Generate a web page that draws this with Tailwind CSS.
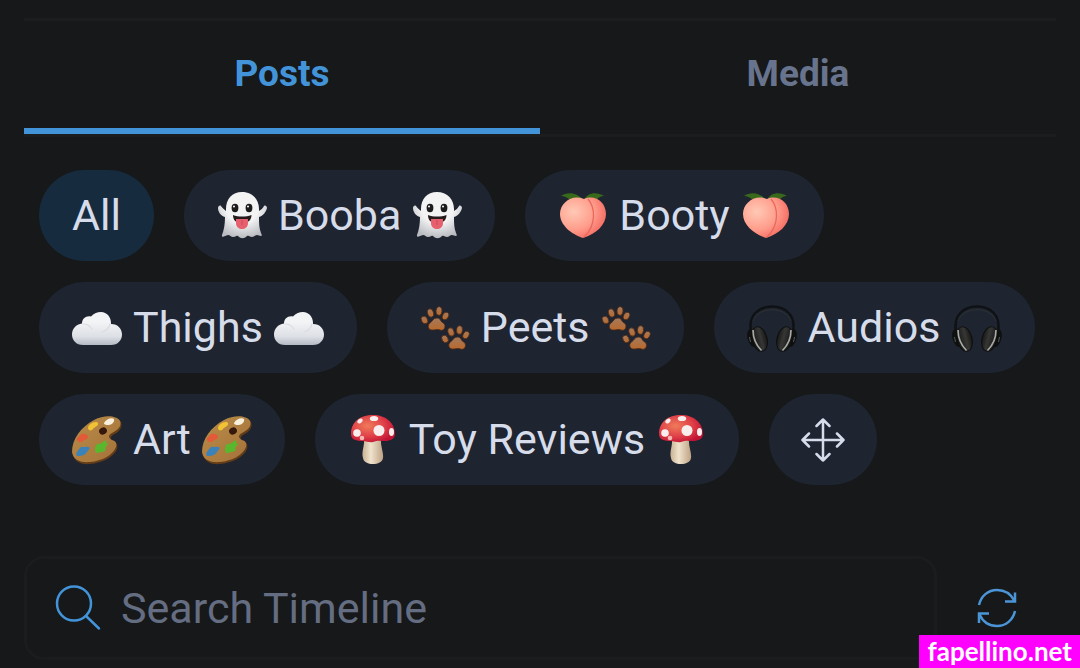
<!DOCTYPE html>
<html lang="en">
<head>
  <meta charset="UTF-8">
  <title>Timeline</title>
  <meta name="viewport" content="width=device-width, initial-scale=1.0" />
  <script src="https://cdn.jsdelivr.net/npm/@tailwindcss/browser@4"></script>
</head>
<body class="min-h-screen overflow-hidden bg-[#161819] font-[Roboto,sans-serif] text-[#d6dcea]">
  <!-- emoji artwork, reused by the chips -->
  <svg class="absolute size-0" aria-hidden="true">
    <defs>
      <radialGradient id="ghostFill" cx=".5" cy=".35" r=".65"><stop offset=".5" stop-color="#f3f3f4"/><stop offset="1" stop-color="#b9bbc0"/></radialGradient>
      <radialGradient id="peachFill" cx=".3" cy=".35" r=".75"><stop offset="0" stop-color="#ffc9b5"/><stop offset=".6" stop-color="#ff9c8b"/><stop offset="1" stop-color="#f4685f"/></radialGradient>
      <linearGradient id="cloudFill" x1="0" y1="0" x2="0" y2="1"><stop offset=".3" stop-color="#f3f4f6"/><stop offset=".75" stop-color="#dcdfe5"/><stop offset="1" stop-color="#b4b9c3"/></linearGradient>
      <linearGradient id="pawFill" x1="0" y1="0" x2="0" y2="1"><stop offset="0" stop-color="#a57a5c"/><stop offset="1" stop-color="#b9692c"/></linearGradient>
      <linearGradient id="woodFill" x1="0" y1="0" x2="1" y2="1"><stop offset="0" stop-color="#b98d48"/><stop offset="1" stop-color="#a4713a"/></linearGradient>
      <radialGradient id="capFill" cx=".38" cy=".4" r=".65"><stop offset="0" stop-color="#f07b5a"/><stop offset=".6" stop-color="#df3f48"/><stop offset="1" stop-color="#c11434"/></radialGradient>
      <linearGradient id="stemFill"><stop offset="0" stop-color="#c9b292"/><stop offset=".4" stop-color="#f0e3cd"/><stop offset="1" stop-color="#bea283"/></linearGradient>
      <linearGradient id="cupFill"><stop offset="0" stop-color="#111211"/><stop offset=".6" stop-color="#363735"/><stop offset="1" stop-color="#151615"/></linearGradient>

      <symbol id="ghost" viewBox="0 0 50 50">
        <path fill="url(#ghostFill)" d="M25 1C15 1 9 8 9 18v2C7 18 5 17 4 15c-1-1-3 0-3 2 0 4 3 8 7 9 0 7-1 13-3 18-.5 2 1 2 3 1l3-1c2 0 3 2 5 2 3 0 3-2 5-1 3 3 6 3 9 0 2-1 3 1 5 1 2 0 3-2 5-2l4 1c1 0 1-1 0-3-2-5-2-10-2-16 4-1 7-5 8-9 0-2-2-3-3-2-1 2-3 4-5 5v-2C42 8 35 1 25 1z"/>
        <ellipse cx="18" cy="17" rx="3.400" ry="4.200" fill="#1d1b1c"/><ellipse cx="32" cy="17" rx="3.400" ry="4.200" fill="#1d1b1c"/>
        <circle cx="17" cy="15.500" r="1" fill="#fff"/><circle cx="31" cy="15.500" r="1" fill="#fff"/>
        <path fill="#251b1c" d="M16 24c5 2 13 2 18.500 0 0 5-3 8-9.500 8s-9-3-9-8z"/>
        <path fill="#e7606e" d="M19 28h12v4c0 8-12 8-12 0z"/><path d="M25 29v5" stroke="#c94659" stroke-width="1"/>
      </symbol>
      <symbol id="peach" viewBox="0 0 50 50">
        <path fill="#39691b" d="M25 9C20 2 10 0 3 5c6 0 8 5 15 5zM26 9c4-8 13-8 20-4-6 0-7 5-13 6z"/>
        <path fill="url(#peachFill)" d="M26 8C14 3 2 12 2 23c0 11 11 20 23 24 13-4 23-13 23-24C48 11 37 3 26 8z"/>
        <path d="M30 8c7 8 9 26-4 38" fill="none" stroke="#e8685d" stroke-width="1.300"/>
      </symbol>
      <symbol id="cloud" viewBox="0 0 50 50">
        <path fill="url(#cloudFill)" d="M11 42C4 42 0 37 0 31.500 0 26 4 21 10 20.500c0-5 4-8 9-7C21 11 25 9 29 9c6 0 10 5 10 11v1c7 0 11 5 11 10.500C50 37 46 42 39 42z"/>
        <path d="M11 21c4 0 7 2 9 5M38 21c-1 4-4 7-8 8" fill="none" stroke="#d9dce1" stroke-width="1.200" stroke-linecap="round"/>
      </symbol>
      <symbol id="paws" viewBox="0 0 50 50">
        <g id="paw" fill="url(#pawFill)" stroke="#4e2a18" stroke-width=".8">
          <path d="M17 15c-4 0-4 3-7 5s-2 7 2 7 5-1 8 0 5-1 5-4-3-3-4-5-2-3-4-3z"/>
          <ellipse cx="4.500" cy="17" rx="3" ry="4" transform="rotate(-30 4.500 17)"/><ellipse cx="10.500" cy="10" rx="3" ry="4.300" transform="rotate(-18 10.500 10)"/>
          <ellipse cx="19" cy="8" rx="3" ry="4.300" transform="rotate(8 19 8)"/><ellipse cx="25.500" cy="13" rx="2.900" ry="4" transform="rotate(28 25.500 13)"/>
        </g>
        <use href="#paw" x="20.500" y="19"/>
      </symbol>
      <symbol id="headphones" viewBox="0 0 50 50">
        <path d="M4 28C1 12 12 3.500 25 3.500S49 12 46 28" fill="none" stroke="#0f1214" stroke-width="2.500"/>
        <path d="M6 18C11 3 39 3 44 18" fill="none" stroke="#2d3132" stroke-width="1"/>
        <g id="cup">
          <ellipse cx="5" cy="35" rx="4.500" ry="9" fill="#0f1010" transform="rotate(-14 5 35)"/>
          <ellipse cx="12.500" cy="36" rx="7.500" ry="12.500" fill="url(#cupFill)" stroke="#0d0e0d" transform="rotate(-14 12.500 36)"/>
          <path d="M6 27c0 9 3 15 8.500 20.500" fill="none" stroke="#a8aaa6" stroke-width="1.700"/>
          <path d="M2.500 34l1 5" stroke="#555855" stroke-width="1"/>
        </g>
        <use href="#cup" transform="matrix(-1 0 0 1 50 0)"/>
      </symbol>
      <symbol id="palette" viewBox="0 0 50 50">
        <path fill="#633c18" d="M1 39C0 25 9 13 23 6c10-5 22-5 26 1 2 6-2 10-8 13-3 2-3 5 0 6 4 1 5 4 4 8-3 8-15 14-27 15C8 50 2 46 1 39z"/>
        <path fill="url(#woodFill)" d="M0 37C0 24 9 12 22 5c10-5 22-5 26 1 2 5-2 9-8 12-4 2-4 5 0 7 4 1 5 4 4 7-3 8-14 14-26 15C7 48 1 44 0 37z"/>
        <ellipse cx="31" cy="16" rx="4" ry="3.400" fill="#35170b" transform="rotate(-30 31 16)"/>
        <path fill="#f7f0dc" d="M32 8c2-4 8-6 10-4 1 3-3 6-5 6s-5 0-5-2z"/>
        <path fill="#f1c234" d="M16 13c0-4 8-8 10-5 1 3-4 4-5 6s-5 2-5-1z"/>
        <path fill="#e25a37" d="M5 25c-1-2 3-4 4-6 3-1 7 0 7 3s-4 2-5 4-5 1-6-1z"/>
        <path fill="#3a82b8" d="M5 37c2-2 3-6 6-5 2 0 5-1 7 1l-3 4c-2 4-7 4-10 4-1-1-1-3 0-4z"/>
        <path fill="#59b72e" d="M23 36c0-4 1-8 5-7l6-4c1 2-1 3 2 4l-3 4c2 3-2 4-4 4s-4 3-6-1z"/>
      </symbol>
      <symbol id="mushroom" viewBox="0 0 50 50">
        <path fill="url(#stemFill)" d="M16 22c1 9-3 15-1 21 1 8 19 8 20 0 1-5-3-12-2-21z"/>
        <path fill="url(#capFill)" d="M3 19C3 7 12 0 25 0s22 8 22 19c0 5-5 7-10 7-4 0-7-1-12 1-3 1-6-1-11-1C7 26 3 24 3 19z"/>
        <g fill="#f9eeee">
          <circle cx="9" cy="18" r="3.800"/><ellipse cx="26" cy="3.500" rx="4.200" ry="2.600"/><circle cx="31" cy="15.500" r="5.500"/>
          <ellipse cx="43.500" cy="17" rx="2.500" ry="4"/><circle cx="14" cy="23" r="2.300" fill="#f6b6b2"/><ellipse cx="12" cy="6" rx="3" ry="2" transform="rotate(-35 12 6)"/>
        </g>
      </symbol>
    </defs>
  </svg>

  <main class="px-6 pt-[18px]">
    <div role="tablist" class="grid grid-cols-2 border-y-3 border-[#1c1d1f] text-[37px] font-bold">
      <button role="tab" aria-selected="true" class="border-b-6 border-[#4393d9] pt-7 pb-[30px] leading-[49px] text-[#4393d9]">Posts</button>
      <button role="tab" aria-selected="false" class="border-b-6 border-transparent pt-7 pb-[30px] leading-[49px] text-[#68748e]">Media</button>
    </div>

    <div class="mt-[33px] flex flex-wrap gap-x-[30px] gap-y-[21px] px-[15px] text-[43px]">
      <button class="flex h-[91px] items-center rounded-full bg-[#162b3e] px-[33px]">All</button>
      <button class="flex h-[91px] items-center gap-[11px] rounded-full bg-[#1e2430] px-[33px]">
        <svg class="size-[50px]" aria-hidden="true"><use href="#ghost"/></svg>Booba<svg class="size-[50px]" aria-hidden="true"><use href="#ghost"/></svg>
      </button>
      <button class="flex h-[91px] items-center gap-[11px] rounded-full bg-[#1e2430] px-[33px]">
        <svg class="size-[50px]" aria-hidden="true"><use href="#peach"/></svg>Booty<svg class="size-[50px]" aria-hidden="true"><use href="#peach"/></svg>
      </button>
      <button class="flex h-[91px] items-center gap-[11px] rounded-full bg-[#1e2430] px-[33px]">
        <svg class="size-[50px]" aria-hidden="true"><use href="#cloud"/></svg>Thighs<svg class="size-[50px]" aria-hidden="true"><use href="#cloud"/></svg>
      </button>
      <button class="flex h-[91px] items-center gap-[11px] rounded-full bg-[#1e2430] px-[33px]">
        <svg class="size-[50px]" aria-hidden="true"><use href="#paws"/></svg>Peets<svg class="size-[50px]" aria-hidden="true"><use href="#paws"/></svg>
      </button>
      <button class="flex h-[91px] items-center gap-[11px] rounded-full bg-[#1e2430] px-[33px]">
        <svg class="size-[50px]" aria-hidden="true"><use href="#headphones"/></svg>Audios<svg class="size-[50px]" aria-hidden="true"><use href="#headphones"/></svg>
      </button>
      <button class="flex h-[91px] items-center gap-[11px] rounded-full bg-[#1e2430] px-[33px]">
        <svg class="size-[50px]" aria-hidden="true"><use href="#palette"/></svg>Art<svg class="size-[50px]" aria-hidden="true"><use href="#palette"/></svg>
      </button>
      <button class="flex h-[91px] items-center gap-[11px] rounded-full bg-[#1e2430] px-[33px]">
        <svg class="size-[50px]" aria-hidden="true"><use href="#mushroom"/></svg>Toy Reviews<svg class="size-[50px]" aria-hidden="true"><use href="#mushroom"/></svg>
      </button>
      <button aria-label="Reorder" class="flex h-[91px] items-center rounded-full bg-[#1e2430] px-8">
        <svg class="size-11" viewBox="0 0 44 44" fill="none" stroke="currentColor" stroke-width="2.500" stroke-linecap="round" stroke-linejoin="round">
          <path d="M22 1.500v41M1.500 22h41M15.500 8L22 1.500 28.500 8M15.500 36l6.500 6.500 6.500-6.500M8 15.500L1.500 22 8 28.500M36 15.500l6.500 6.500-6.500 6.500"/>
        </svg>
      </button>
    </div>

    <form class="mt-[71px] flex items-center">
      <label class="flex h-[104px] min-w-0 flex-1 items-center gap-[19px] rounded-[20px] border-3 border-[#1b1c1e] pl-[27px]">
        <svg class="size-12 shrink-0 text-[#4393d9]" viewBox="0 0 48 48" fill="none" stroke="currentColor" stroke-width="2.500" stroke-linecap="round" aria-hidden="true">
          <circle cx="20" cy="19.500" r="17"/><path d="M32 32l13 12.500"/>
        </svg>
        <input type="text" aria-label="Search Timeline" placeholder="Search Timeline" class="min-w-0 flex-1 text-[43px] leading-[52px] outline-none placeholder:text-[#646d81]">
      </label>
      <button type="button" aria-label="Refresh" class="mr-[39px] ml-10 text-[#4b95d6]">
        <svg class="size-10" viewBox="0 0 40 40" fill="none" stroke="currentColor" stroke-width="2.500">
          <path d="M2 17C4 8 11 2 20 2c8 0 14 4 17.500 11M38 4.500v9H28M38 23c-2 9-9 15-18 15-8 0-14-4-17.500-11.500M2 35v-9.500h10"/>
        </svg>
      </button>
    </form>
  </main>

  <div class="fixed right-0 bottom-0 bg-[#ff00ff] px-2 font-[Lato,sans-serif] text-[26px] leading-[33px] font-bold text-white">fapellino.net</div>
</body>
</html>
